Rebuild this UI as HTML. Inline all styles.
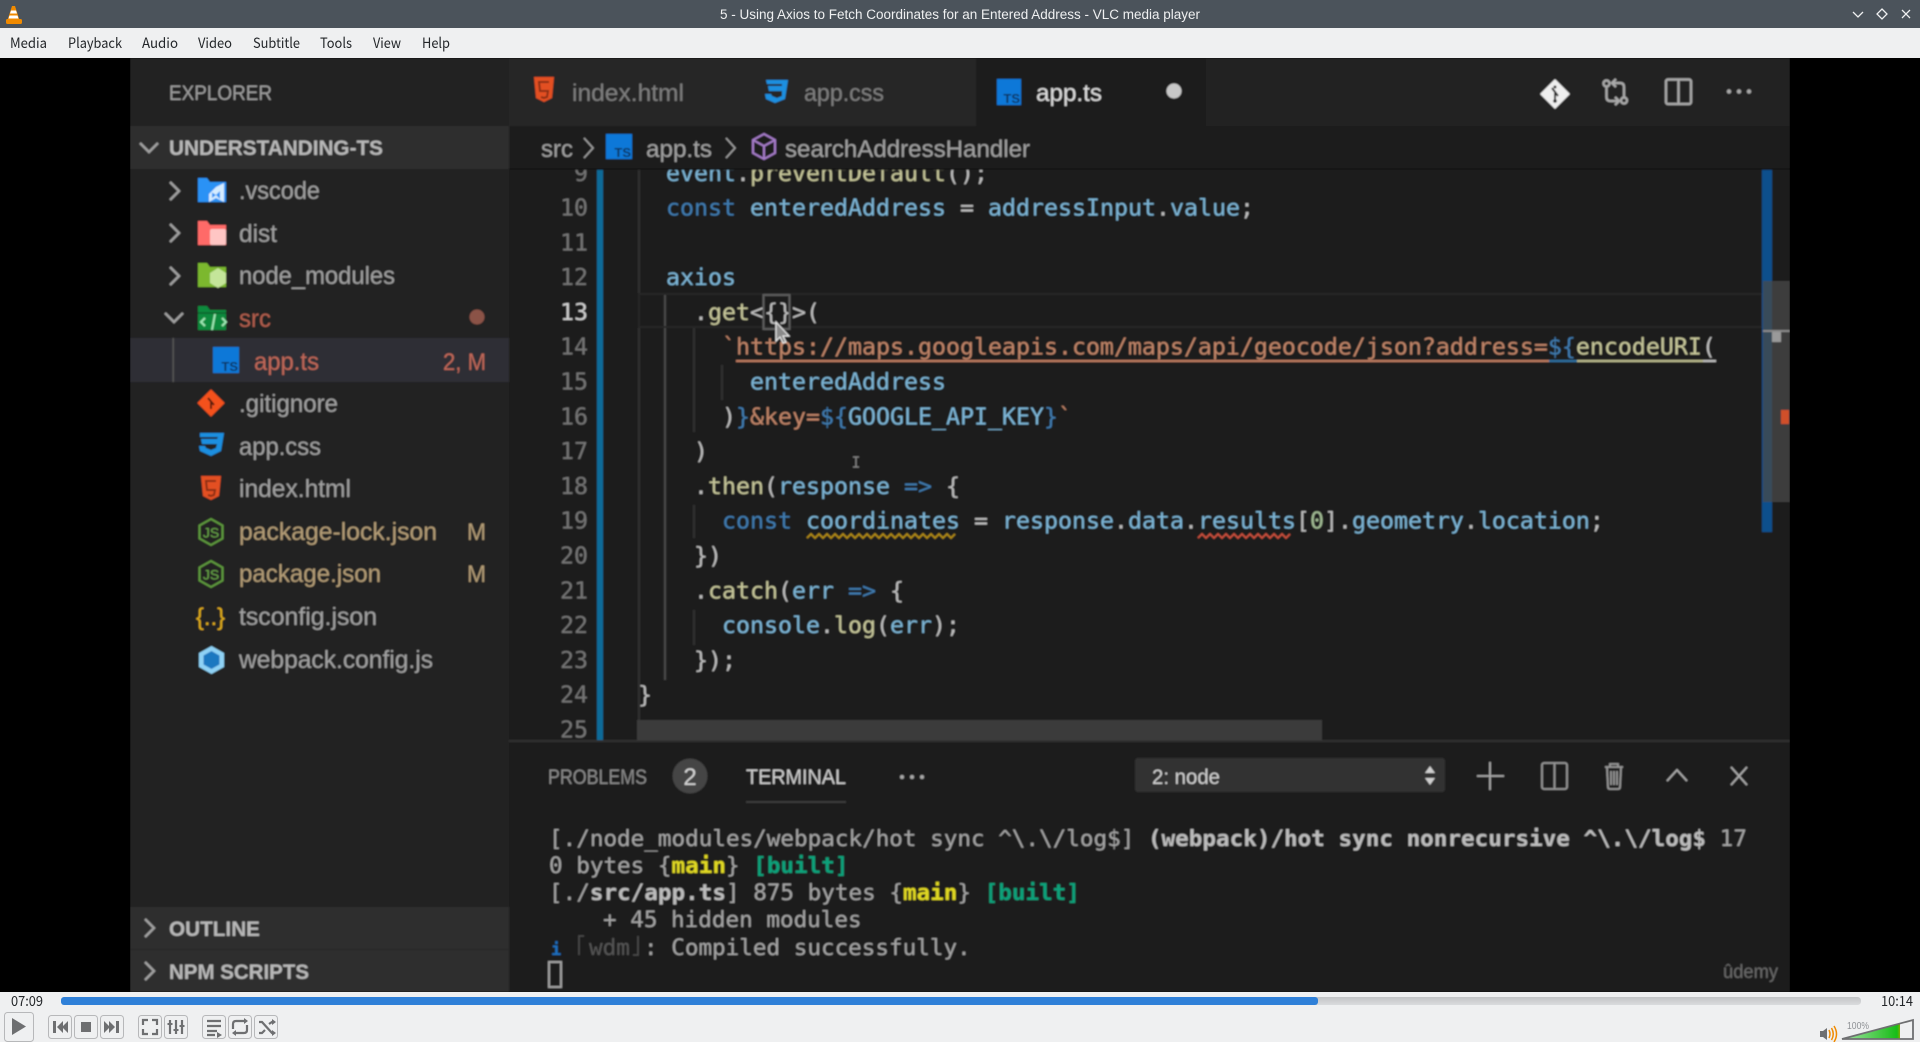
<!DOCTYPE html>
<html lang="en">
<head>
<meta charset="utf-8">
<title>5 - Using Axios to Fetch Coordinates for an Entered Address - VLC media player</title>
<style>
html,body{margin:0;padding:0;background:#000;width:1920px;height:1042px;overflow:hidden}
svg{display:block}
.s{font-family:"Liberation Sans",sans-serif}
.m{font-family:"DejaVu Sans Mono","Liberation Mono",monospace;font-size:23.25px}
.t{font-family:"DejaVu Sans Mono","Liberation Mono",monospace;font-size:22.62px}
.n{font-family:"DejaVu Sans Mono","Liberation Mono",monospace;font-size:23.25px;fill:#747474;text-anchor:end}
.k{fill:#3f7cb0}.v{fill:#7db5d6}.y{fill:#c6c69a}.w{fill:#bdbdbd}.r{fill:#c08468}.g{fill:#a3bd95}
.d{fill:#bdbdbd}.b{font-weight:bold}
.ch{fill:none;stroke:#a0a0a0;stroke-width:2.4}
.ic{fill:none;stroke:#a9a9a9;stroke-width:2.4}
.ui{font-family:"Noto Sans CJK SC","Liberation Sans",sans-serif;font-size:14px;fill:#232629}
.bt{fill:#eff0f1;stroke:#b7b8ba;stroke-width:1}
.bi{fill:#6e6f71}
.bl{fill:none;stroke:#6e6f71;stroke-width:2.2}
</style>
</head>
<body>
<svg width="1920" height="1042" viewBox="0 0 1920 1042" xmlns="http://www.w3.org/2000/svg">
<defs>
<filter id="bl" filterUnits="userSpaceOnUse" x="130" y="58" width="1660" height="934"><feGaussianBlur stdDeviation="0.8"/></filter>
<clipPath id="vc"><rect x="130" y="58" width="1660" height="934"/></clipPath>
<linearGradient id="vg" x1="0" x2="1" y1="0" y2="0"><stop offset="0" stop-color="#a5e3a5"/><stop offset="0.95" stop-color="#17bd17"/><stop offset="1" stop-color="#7fb000"/></linearGradient>
<linearGradient id="gr" x1="0" x2="0" y1="0" y2="1"><stop offset="0" stop-color="#c3c5c7"/><stop offset="1" stop-color="#dadbdd"/></linearGradient>
</defs>

<!-- window chrome -->
<rect x="0" y="0" width="1920" height="28" fill="#4b535b"/>
<rect x="0" y="28" width="1920" height="30" fill="#eff0f1"/>
<rect x="0" y="58" width="1920" height="934" fill="#000"/>
<rect x="0" y="992" width="1920" height="50" fill="#eff0f1"/>

<!-- VLC cone -->
<path d="M12 6h3l4.500 14h-12z" fill="#f08a00"/>
<path d="M11 10.500h5l1 3h-7z" fill="#fff"/>
<path d="M9.500 15.500h8l1 3h-10z" fill="#fff"/>
<rect x="6" y="19" width="16" height="5" rx="1.500" fill="#f08a00"/>

<text class="s" x="720" y="19" font-size="13.5" fill="#eff0f1" textLength="480" lengthAdjust="spacingAndGlyphs">5 - Using Axios to Fetch Coordinates for an Entered Address - VLC media player</text>
<path d="M1853 12l5 5 5-5" fill="none" stroke="#eff0f1" stroke-width="1.300"/>
<path d="M1882 9l5 5-5 5-5-5z" fill="none" stroke="#eff0f1" stroke-width="1.300"/>
<path d="M1902 10l8 8m0-8l-8 8" fill="none" stroke="#eff0f1" stroke-width="1.300"/>

<text class="ui" x="10" y="48" textLength="37" lengthAdjust="spacingAndGlyphs">Media</text>
<text class="ui" x="68" y="48" textLength="54" lengthAdjust="spacingAndGlyphs">Playback</text>
<text class="ui" x="142" y="48" textLength="36" lengthAdjust="spacingAndGlyphs">Audio</text>
<text class="ui" x="198" y="48" textLength="34" lengthAdjust="spacingAndGlyphs">Video</text>
<text class="ui" x="253" y="48" textLength="47" lengthAdjust="spacingAndGlyphs">Subtitle</text>
<text class="ui" x="320" y="48" textLength="32" lengthAdjust="spacingAndGlyphs">Tools</text>
<text class="ui" x="373" y="48" textLength="28" lengthAdjust="spacingAndGlyphs">View</text>
<text class="ui" x="422" y="48" textLength="28" lengthAdjust="spacingAndGlyphs">Help</text>

<!-- video -->
<g filter="url(#bl)" clip-path="url(#vc)">
<rect x="130" y="58" width="1660" height="934" fill="#1b1b1b"/>

<!-- editor -->
<g>
<path d="M639 168V720" stroke="#303030" stroke-width="2"/>
<path d="M665 294V680" stroke="#4a4a4a" stroke-width="2"/>
<path d="M694 328V432M694 505V538M694 610V645" stroke="#333" stroke-width="2"/>
<path d="M722 365V400" stroke="#333" stroke-width="2"/>
<rect x="639" y="294" width="1123" height="33" fill="none" stroke="#262626" stroke-width="2"/>
<rect x="597" y="168" width="6" height="572" fill="#0a6a98"/>

<g class="n">
<text x="588" y="181">9</text>
<text x="588" y="215.500">10</text>
<text x="588" y="250.300">11</text>
<text x="588" y="285.100">12</text>
<text x="588" y="319.900" style="fill:#cfcfcf">13</text>
<text x="588" y="354.700">14</text>
<text x="588" y="389.500">15</text>
<text x="588" y="424.300">16</text>
<text x="588" y="459.100">17</text>
<text x="588" y="493.900">18</text>
<text x="588" y="528.700">19</text>
<text x="588" y="563.500">20</text>
<text x="588" y="598.300">21</text>
<text x="588" y="633.100">22</text>
<text x="588" y="667.900">23</text>
<text x="588" y="702.700">24</text>
<text x="588" y="737.500">25</text>
</g>

<g class="m" xml:space="preserve">
<text x="666" y="181"><tspan class="v">event</tspan><tspan class="w">.</tspan><tspan class="y">preventDefault</tspan><tspan class="w">();</tspan></text>
<text x="666" y="215.500"><tspan class="k">const</tspan><tspan class="v"> enteredAddress</tspan><tspan class="w"> = </tspan><tspan class="v">addressInput</tspan><tspan class="w">.</tspan><tspan class="v">value</tspan><tspan class="w">;</tspan></text>
<text x="666" y="285.100" class="v">axios</text>
<text x="694" y="319.900"><tspan class="w">.</tspan><tspan class="y">get</tspan><tspan class="w">&lt;{}&gt;(</tspan></text>
<text x="722" y="354.700"><tspan class="r">`https://maps.googleapis.com/maps/api/geocode/json?address=</tspan><tspan class="k">${</tspan><tspan class="y">encodeURI</tspan><tspan class="w">(</tspan></text>
<text x="750" y="389.500" class="v">enteredAddress</text>
<text x="722" y="424.300"><tspan class="w">)</tspan><tspan class="k">}</tspan><tspan class="r">&amp;key=</tspan><tspan class="k">${</tspan><tspan class="v">GOOGLE_API_KEY</tspan><tspan class="k">}</tspan><tspan class="r">`</tspan></text>
<text x="694" y="459.100" class="w">)</text>
<text x="694" y="493.900"><tspan class="w">.</tspan><tspan class="y">then</tspan><tspan class="w">(</tspan><tspan class="v">response</tspan><tspan class="k"> =&gt; </tspan><tspan class="w">{</tspan></text>
<text x="722" y="528.700"><tspan class="k">const</tspan><tspan class="v"> coordinates</tspan><tspan class="w"> = </tspan><tspan class="v">response</tspan><tspan class="w">.</tspan><tspan class="v">data</tspan><tspan class="w">.</tspan><tspan class="v">results</tspan><tspan class="w">[</tspan><tspan class="g">0</tspan><tspan class="w">].</tspan><tspan class="v">geometry</tspan><tspan class="w">.</tspan><tspan class="v">location</tspan><tspan class="w">;</tspan></text>
<text x="694" y="563.500" class="w">})</text>
<text x="694" y="598.300"><tspan class="w">.</tspan><tspan class="y">catch</tspan><tspan class="w">(</tspan><tspan class="v">err</tspan><tspan class="k"> =&gt; </tspan><tspan class="w">{</tspan></text>
<text x="722" y="633.100"><tspan class="v">console</tspan><tspan class="w">.</tspan><tspan class="y">log</tspan><tspan class="w">(</tspan><tspan class="v">err</tspan><tspan class="w">);</tspan></text>
<text x="694" y="667.900" class="w">});</text>
<text x="638" y="702.700" class="w">}</text>
</g>

<!-- underlines, squiggles, bracket box -->
<path d="M736 361H1549" stroke="#bd7a60" stroke-width="2.200"/>
<path d="M1549 361H1577" stroke="#2f6fa0" stroke-width="2.200"/>
<path d="M1577 361H1703" stroke="#b9b98c" stroke-width="2.200"/>
<path d="M1703 361H1716" stroke="#bdbdbd" stroke-width="2.200"/>
<path d="M807 538l4-4 4 4 4-4 4 4 4-4 4 4 4-4 4 4 4-4 4 4 4-4 4 4 4-4 4 4 4-4 4 4 4-4 4 4 4-4 4 4 4-4 4 4 4-4 4 4 4-4 4 4 4-4 4 4 4-4 4 4 4-4 4 4 4-4 4 4 4-4 4 4 4-4" fill="none" stroke="#b08a18" stroke-width="1.800"/>
<path d="M1198 538l4-4 4 4 4-4 4 4 4-4 4 4 4-4 4 4 4-4 4 4 4-4 4 4 4-4 4 4 4-4 4 4 4-4 4 4 4-4 4 4 4-4 4 4 4-4" fill="none" stroke="#c9503c" stroke-width="1.800"/>
<rect x="763.500" y="295" width="26" height="34" fill="none" stroke="#5c5c5c" stroke-width="2"/>
<path d="M776 322v19l4-4 3 6 3-1-3-6h6z" fill="#8a8a8a" stroke="#e8e8e8" stroke-width="1.200"/>
<path d="M853 457h6M856 457v10M853 467h6" stroke="#888" stroke-width="1.300" fill="none"/>

<!-- scrollbars -->
<rect x="637" y="720" width="685" height="20" fill="#3a3a3a"/>
<rect x="1762" y="168" width="10" height="364" fill="#0a4f8c"/>
<rect x="1763" y="281" width="27" height="221" fill="#4a4a4a" opacity=".75"/>
<rect x="1772" y="330" width="9" height="12" fill="#9a9a9a"/>
<rect x="1763" y="330" width="27" height="2" fill="#8a8a8a"/>
<rect x="1781" y="410" width="8" height="14" fill="#d04f2c"/>
</g>

<!-- tab bar -->
<rect x="509" y="58" width="1281" height="68" fill="#212121"/>
<rect x="509" y="58" width="467" height="68" fill="#282828"/>
<rect x="741" y="58" width="1" height="68" fill="#222"/>
<rect x="976" y="58" width="230" height="68" fill="#1c1c1c"/>
<!-- breadcrumb -->
<rect x="509" y="126" width="1281" height="42" fill="#1c1c1c"/>
<rect x="509" y="168" width="1281" height="2" fill="#161616"/>

<!-- tab icons -->
<path d="M534 77h20l-2 21-8 4-8-4z" fill="#e34f22"/>
<path d="M549 82h-10l1 9h8l-1 6-3 1-3-1" fill="none" stroke="#8a2f12" stroke-width="2"/>
<path d="M766 80h22l-3 19-10 4-9-4-1-5h6l1 2 5 2 5-2 0-5h-13l-1-5h14v-2h-15z" fill="#1f8fe0"/>
<rect x="997" y="79" width="24" height="26" fill="#0a78d8"/>
<text class="s" x="1020" y="103" font-size="13" font-weight="bold" text-anchor="end" fill="#0a3560">TS</text>
<text class="s" x="572" y="101" font-size="24.5" fill="#7e7e7e" textLength="112" lengthAdjust="spacingAndGlyphs">index.html</text>
<text class="s" x="804" y="101" font-size="24.5" fill="#7e7e7e" textLength="80" lengthAdjust="spacingAndGlyphs">app.css</text>
<text class="s" x="1036" y="101" font-size="24.5" fill="#ddd" textLength="66" lengthAdjust="spacingAndGlyphs">app.ts</text>
<circle cx="1174" cy="91" r="7.500" fill="#c8c8c8"/>

<!-- right editor actions -->
<path d="M1555 80l14 14-14 14-14-14z" fill="#eee" stroke="#eee" stroke-width="1.500" stroke-linejoin="round"/>
<path d="M1552 88l6 8m-3-3v8" stroke="#222" stroke-width="2" fill="none"/>
<circle cx="1555" cy="87" r="1.500" fill="#222"/><circle cx="1555" cy="101" r="1.800" fill="#222"/>
<g class="ic">
<circle cx="1606.500" cy="83.500" r="3"/><circle cx="1624" cy="100.500" r="3"/>
<path d="M1606.500 87v10q0 4 4 4h8M1615 97l4 4-4 4M1624 97V87q0-4-4-4h-8M1616 79l-4 4 4 4"/>
<rect x="1666" y="79.500" width="25" height="24.500" rx="2"/><path d="M1678.500 80v24"/>
</g>
<g fill="#a9a9a9"><circle cx="1729" cy="91.500" r="2.200"/><circle cx="1739" cy="91.500" r="2.200"/><circle cx="1749" cy="91.500" r="2.200"/></g>

<!-- breadcrumb content -->
<text class="s" x="541" y="157" font-size="24" fill="#a0a0a0" textLength="32" lengthAdjust="spacingAndGlyphs">src</text>
<path class="ch" d="M584 138l9 10-9 10" style="stroke-width:1.600"/>
<rect x="606" y="134" width="26" height="25" fill="#0a78d8"/>
<text class="s" x="631" y="157" font-size="13" font-weight="bold" text-anchor="end" fill="#0a3560">TS</text>
<text class="s" x="646" y="157" font-size="24" fill="#a0a0a0" textLength="66" lengthAdjust="spacingAndGlyphs">app.ts</text>
<path class="ch" d="M726 138l9 10-9 10" style="stroke-width:1.600"/>
<path d="M764 134l11 6v13l-11 6-11-6v-13zM753 140l11 6 11-6M764 146v13" fill="none" stroke="#a57cc8" stroke-width="2"/>
<text class="s" x="785" y="157" font-size="24" fill="#a0a0a0" textLength="245" lengthAdjust="spacingAndGlyphs">searchAddressHandler</text>

<!-- sidebar -->
<rect x="130" y="58" width="379" height="934" fill="#212121"/>
<rect x="130" y="126" width="379" height="43" fill="#2f2f2f"/>
<rect x="130" y="338" width="379" height="44" fill="#2e2e35"/>
<rect x="172.500" y="338" width="1.500" height="44" fill="#555"/>
<rect x="130" y="907" width="379" height="85" fill="#2f2f2f"/>
<rect x="130" y="949" width="379" height="1" fill="#282828"/>

<text class="s" x="169" y="100" font-size="21" fill="#9e9e9e" textLength="103" lengthAdjust="spacingAndGlyphs">EXPLORER</text>
<text class="s b" x="169" y="155" font-size="21" fill="#b8b8b8" textLength="214" lengthAdjust="spacingAndGlyphs">UNDERSTANDING-TS</text>
<path class="ch" d="M140 143l9 9 9-9"/>
<path class="ch" d="M170 182l9 9-9 9M170 224l9 9-9 9M170 267l9 9-9 9"/>
<path class="ch" d="M165 313l9 9 9-9"/>

<!-- folder icons -->
<path d="M198 178h9l3 4h16v20h-28z" fill="#2a92f5"/><path d="M209 194l7-7 8-4v19l-8-4-7 4z M212 192.500l4 2.500 4-4v8l-4-4-4 3z" fill="#d5ecff" fill-rule="evenodd"/>
<path d="M198 221h9l3 4h16v20h-28z" fill="#ff6b68"/><rect x="210" y="229" width="16" height="16" rx="2" fill="#ffc6c4"/>
<path d="M198 263h9l3 4h16v20h-28z" fill="#7cb82f"/><path d="M218 268l8 5v10l-8 5-8-5v-10z" fill="#c4e59a"/>
<path d="M198 306h9l3 4h16v20h-28z" fill="#0f8a3c"/><path d="M205 318l-4 4 4 4M222 318l4 4-4 4M215 314l-3 16" fill="none" stroke="#9fe8b5" stroke-width="2"/>
<path d="M198 313h28" stroke="#0b6b2e" stroke-width="2"/>
<!-- file icons -->
<rect x="213" y="347" width="26" height="26" fill="#0a78d8"/>
<text class="s" x="238" y="371" font-size="13" font-weight="bold" text-anchor="end" fill="#0a3560">TS</text>
<path d="M211 390l13 13-13 13-13-13z" fill="#f4511e" stroke="#f4511e" stroke-width="1" stroke-linejoin="round"/><path d="M208 398l6 7m-3-3v7" stroke="#5a1c08" stroke-width="2" fill="none"/>
<path d="M200 433h24l-3 18-10 5-11-5-1-5h6l1 2 5 2 5-2 1-4h-15l-1-5h16l1-2h-18z" fill="#1f8fe0"/>
<path d="M201 476h20l-2 20-8 4-8-4z" fill="#e34f22"/>
<path d="M216 481h-10l1 9h8l-1 5-3 1-3-1" fill="none" stroke="#8a2f12" stroke-width="2"/>
<path d="M211 519l11.500 6.500v13L211 545l-11.500-6.500v-13zM211 561l11.500 6.500v13L211 587l-11.500-6.500v-13z" fill="none" stroke="#5e9a3c" stroke-width="2"/>
<text class="s" x="211" y="537.500" font-size="14" text-anchor="middle" fill="#6aa84a">JS</text>
<text class="s" x="211" y="579.500" font-size="14" text-anchor="middle" fill="#6aa84a">JS</text>
<text class="s" x="210.500" y="625" font-size="24" text-anchor="middle" fill="#e2ae1c">{..}</text>
<path d="M211.500 646l12.500 7v14l-12.500 7-12.500-7v-14z" fill="#8fd2f5"/>
<path d="M211.500 651l8 4.500v9l-8 4.500-8-4.500v-9z" fill="#1c78c0"/>

<!-- file labels -->
<text class="s" x="239" y="199" font-size="25" fill="#a0a0a0" textLength="81" lengthAdjust="spacingAndGlyphs">.vscode</text>
<text class="s" x="239" y="242" font-size="25" fill="#a0a0a0" textLength="38" lengthAdjust="spacingAndGlyphs">dist</text>
<text class="s" x="239" y="284" font-size="25" fill="#a0a0a0" textLength="156" lengthAdjust="spacingAndGlyphs">node_modules</text>
<text class="s" x="239" y="327" font-size="25" fill="#b35f4e" textLength="32" lengthAdjust="spacingAndGlyphs">src</text>
<circle cx="477" cy="317" r="7.500" fill="#8b5347"/>
<text class="s" x="254" y="370" font-size="25" fill="#c06858" textLength="65" lengthAdjust="spacingAndGlyphs">app.ts</text>
<text class="s" x="443" y="370" font-size="24" fill="#c06858" textLength="43" lengthAdjust="spacingAndGlyphs">2, M</text>
<text class="s" x="239" y="412" font-size="25" fill="#a0a0a0" textLength="99" lengthAdjust="spacingAndGlyphs">.gitignore</text>
<text class="s" x="239" y="455" font-size="25" fill="#a0a0a0" textLength="82" lengthAdjust="spacingAndGlyphs">app.css</text>
<text class="s" x="239" y="497" font-size="25" fill="#a0a0a0" textLength="112" lengthAdjust="spacingAndGlyphs">index.html</text>
<text class="s" x="239" y="540" font-size="25" fill="#b39c76" textLength="198" lengthAdjust="spacingAndGlyphs">package-lock.json</text>
<text class="s" x="467" y="540" font-size="24" fill="#b39c76" textLength="19" lengthAdjust="spacingAndGlyphs">M</text>
<text class="s" x="239" y="582" font-size="25" fill="#b39c76" textLength="142" lengthAdjust="spacingAndGlyphs">package.json</text>
<text class="s" x="467" y="582" font-size="24" fill="#b39c76" textLength="19" lengthAdjust="spacingAndGlyphs">M</text>
<text class="s" x="239" y="625" font-size="25" fill="#a0a0a0" textLength="138" lengthAdjust="spacingAndGlyphs">tsconfig.json</text>
<text class="s" x="239" y="668" font-size="25" fill="#a0a0a0" textLength="194" lengthAdjust="spacingAndGlyphs">webpack.config.js</text>

<path class="ch" d="M145 919l9 9-9 9M145 962l9 9-9 9"/>
<text class="s b" x="169" y="936" font-size="21" fill="#b8b8b8" textLength="91" lengthAdjust="spacingAndGlyphs">OUTLINE</text>
<text class="s b" x="169" y="979" font-size="21" fill="#b8b8b8" textLength="140" lengthAdjust="spacingAndGlyphs">NPM SCRIPTS</text>

<!-- panel -->
<rect x="509" y="740" width="1281" height="252" fill="#1b1b1b"/>
<rect x="509" y="740" width="1281" height="2" fill="#333"/>
<text class="s" x="548" y="784" font-size="21" fill="#8a8a8a" textLength="99" lengthAdjust="spacingAndGlyphs">PROBLEMS</text>
<circle cx="690" cy="776" r="17.500" fill="#444"/>
<text class="s" x="690" y="785" font-size="24" text-anchor="middle" fill="#d4d4d4">2</text>
<text class="s" x="746" y="784" font-size="21" fill="#cfcfcf" textLength="100" lengthAdjust="spacingAndGlyphs">TERMINAL</text>
<rect x="746" y="801" width="100" height="2" fill="#3a3a3a"/>
<g fill="#a9a9a9"><circle cx="902" cy="777" r="2"/><circle cx="912" cy="777" r="2"/><circle cx="922" cy="777" r="2"/></g>

<rect x="1135" y="758" width="310" height="34" rx="3" fill="#333"/>
<text class="s" x="1152" y="784" font-size="21" fill="#cfcfcf" textLength="68" lengthAdjust="spacingAndGlyphs">2: node</text>
<path d="M1430 766l5 7h-10zM1430 785l5-7h-10z" fill="#cfcfcf"/>
<path d="M1490 762v28M1477 776h27" fill="none" stroke="#aaa" stroke-width="1.800"/>
<rect x="1542" y="763" width="25" height="26" rx="2" fill="none" stroke="#999" stroke-width="1.800"/><path d="M1554.500 763v26" stroke="#999" stroke-width="1.800"/>
<path d="M1605 767h18M1610 767v-3h8v3M1607 767l1 20q0 2 2 2h8q2 0 2-2l1-20M1611 771v14M1614 771v14M1617 771v14" fill="none" stroke="#999" stroke-width="1.800"/>
<path d="M1667 781l10-11 10 11" fill="none" stroke="#aaa" stroke-width="1.800"/>
<path d="M1731 767l16 18m0-18l-16 18" fill="none" stroke="#aaa" stroke-width="1.800"/>

<g class="t" xml:space="preserve" fill="#a4a4a4">
<text x="549" y="846">[./node_modules/webpack/hot sync ^\.\/log$] <tspan class="b" fill="#bcbcbc">(webpack)/hot sync nonrecursive ^\.\/log$</tspan> 17</text>
<text x="549" y="873">0 bytes {<tspan class="b" fill="#e0d820">main</tspan>} <tspan class="b" fill="#11a17a">[built]</tspan></text>
<text x="549" y="900">[./<tspan class="b" fill="#bcbcbc">src/app.ts</tspan>] 875 bytes {<tspan class="b" fill="#e0d820">main</tspan>} <tspan class="b" fill="#11a17a">[built]</tspan></text>
<text x="603" y="927">+ 45 hidden modules</text>
<text x="551" y="955"><tspan fill="#1a6fc0" class="b" font-size="17">i</tspan></text>
<text x="589" y="955" fill="#555">wdm</text>
<text x="644" y="955">: Compiled successfully.</text>
</g>
<path d="M584 936h-5v19M633 955h5v-19" fill="none" stroke="#4e4e4e" stroke-width="1.500"/>
<rect x="549" y="962" width="12" height="25" fill="none" stroke="#a0a0a0" stroke-width="2"/>
<text class="s" x="1723" y="978" font-size="19" fill="#6a6a6a" textLength="55" lengthAdjust="spacingAndGlyphs">ûdemy</text>
</g>

<!-- seek row -->
<text class="ui" x="11" y="1006" textLength="32" lengthAdjust="spacingAndGlyphs">07:09</text>
<rect x="61" y="997" width="1800" height="8" rx="3.500" fill="url(#gr)"/>
<rect x="61" y="997" width="1257" height="8" rx="3" fill="#2f80d8"/>
<text class="ui" x="1881" y="1006" textLength="32" lengthAdjust="spacingAndGlyphs">10:14</text>

<!-- controls -->
<rect class="bt" x="4.500" y="1012.500" width="29" height="29" rx="3"/>
<path class="bi" d="M12 1018l14 8.500-14 8.500z"/>
<rect class="bt" x="48.500" y="1015.500" width="23" height="23" rx="3"/>
<path class="bi" d="M53 1021h3v12h-3zM57 1027l6-6v12zM62 1027l6-6v12z"/>
<rect class="bt" x="74.500" y="1015.500" width="23" height="23" rx="3"/>
<rect class="bi" x="81" y="1022" width="10" height="10"/>
<rect class="bt" x="100.500" y="1015.500" width="23" height="23" rx="3"/>
<path class="bi" d="M119 1021h-3v12h3zM115 1027l-6-6v12zM110 1027l-6-6v12z"/>
<rect class="bt" x="138.500" y="1015.500" width="23" height="23" rx="3"/>
<path class="bl" d="M143 1025v-5h5M152 1020h5v5M157 1029v5h-5M148 1034h-5v-5"/>
<rect class="bt" x="164.500" y="1015.500" width="23" height="23" rx="3"/>
<path class="bl" d="M170 1020v14M176 1020v14M182 1020v14"/>
<path class="bi" d="M167.500 1023h5v2h-5zM173.500 1029h5v2h-5zM179.500 1025h5v2h-5z"/>
<rect class="bt" x="202.500" y="1015.500" width="23" height="23" rx="3"/>
<path class="bl" d="M207 1021h14M207 1026h14M207 1031h10M207 1035h8"/>
<path class="bi" d="M217 1032l5 3-5 3z"/>
<rect class="bt" x="228.500" y="1015.500" width="23" height="23" rx="3"/>
<path class="bl" d="M233 1029v-5q0-3 3-3h10M247 1025v5q0 3-3 3h-10"/>
<path class="bi" d="M244 1018l4 3-4 3zM236 1030l-4 3 4 3z"/>
<rect class="bt" x="254.500" y="1015.500" width="23" height="23" rx="3"/>
<path class="bl" d="M259 1022h3l10 11h2M259 1033h3l3-3M269 1024l3-2h2"/>
<path class="bi" d="M272 1019l4 3-4 3zM272 1030l4 3-4 3z"/>

<!-- volume -->
<path class="bi" d="M1820 1031h3l4-3v12l-4-3h-3z"/>
<path d="M1829 1030q2 4 0 8M1831.500 1028q3.500 6 0 12M1834 1026q5 8 0 16" fill="none" stroke="#f08a00" stroke-width="1.500"/>
<text class="s" x="1847" y="1029" font-size="10.500" fill="#8f9296" textLength="22" lengthAdjust="spacingAndGlyphs">100%</text>
<path d="M1842 1039L1900 1023.500V1039z" fill="url(#vg)"/>
<path d="M1842 1039L1913 1020V1039z" fill="none" stroke="#6e6f71" stroke-width="1.800"/>
</svg>
</body>
</html>
